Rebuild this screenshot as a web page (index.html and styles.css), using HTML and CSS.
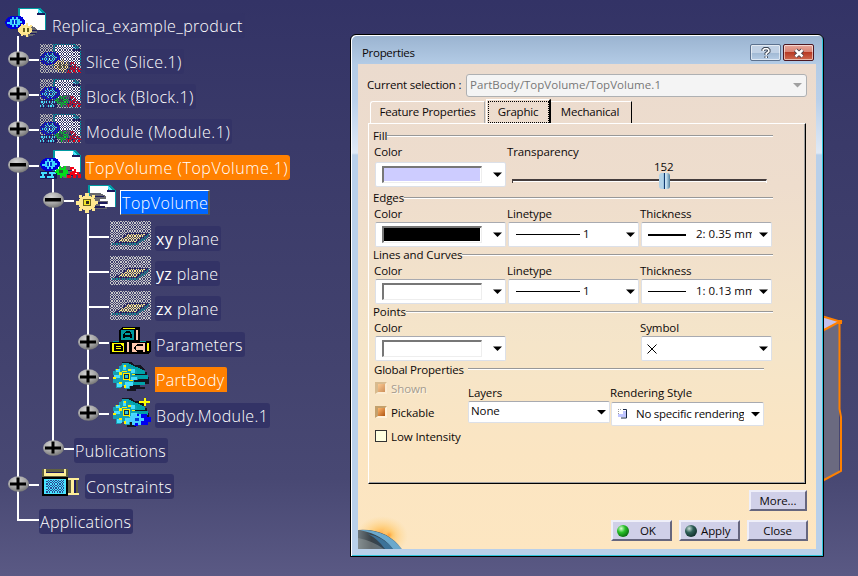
FILE: index.html
```html
<!DOCTYPE html>
<html lang="en">
<head>
<meta charset="utf-8">
<title>Properties</title>
<link rel="stylesheet" href="styles.css">
</head>
<body>
<svg class="defs" width="0" height="0" aria-hidden="true">
  <defs>
    <mask id="dither" maskUnits="userSpaceOnUse" x="0" y="0" width="41" height="29"><g transform="scale(1.28125 1.31818)" fill="none" stroke="#fff" stroke-dasharray="1 1" shape-rendering="crispEdges"><path d="M0 .5H32M0 2.500H32M0 4.500H32M0 6.500H32M0 8.500H32M0 10.500H32M0 12.500H32M0 14.500H32M0 16.500H32M0 18.500H32M0 20.500H32"/><path d="M1 1.500H32M1 3.500H32M1 5.500H32M1 7.500H32M1 9.500H32M1 11.500H32M1 13.500H32M1 15.500H32M1 17.500H32M1 19.500H32M1 21.500H32"/></g></mask>
    <radialGradient id="ball" cx=".4" cy=".3" r=".75"><stop offset="0" stop-color="#d4d4d4"/><stop offset=".6" stop-color="#a2a2a2"/><stop offset="1" stop-color="#707070"/></radialGradient>
    <symbol id="plus" viewBox="0 0 21 16"><ellipse cx="10.5" cy="8" rx="10.5" ry="7.8" fill="url(#ball)"/><path d="M2 6.500h16v3h-16zM8.500 1.500h3v12h-3z" fill="#000"/></symbol>
    <symbol id="minus" viewBox="0 0 21 16"><ellipse cx="10.5" cy="8" rx="10.5" ry="7.800" fill="url(#ball)"/><path d="M2 6h16v3.500h-16z" fill="#000"/></symbol>
    <symbol id="page" viewBox="0 0 41 29"><path d="M13 0h22l6 6v16H13z" fill="#009aa2"/><path d="M14.500 1h18v4h7v16.500h-25z" fill="#fff"/><path d="M33 1l6 5h-3l-3-2z" fill="#4fe6ff"/><path d="M32 5h8v1.500h-8z" fill="#1c1a5c"/></symbol>
    <symbol id="bluegear" viewBox="0 0 20 14"><ellipse cx="11.500" cy="7" rx="8.500" ry="6.500" fill="#0000e0"/><ellipse cx="9" cy="7.500" rx="9" ry="6.500" fill="#0000d8"/><path d="M5 4h2V2h2v2h2V2h2v2h2v2h2v2h-2v2h-2v2h-2v-2H9v2H7v-2H5V9H2V7h3z" fill="#3fd4ff"/><path d="M7 5h5v4H7z" fill="#003ad8"/><path d="M9 5h1v4H9z" fill="#9ff"/></symbol>
    <symbol id="goldgear" viewBox="0 0 20 14"><ellipse cx="11.500" cy="8" rx="8.500" ry="5.500" fill="#68686e"/><path d="M14 7h6v1h-6zM13 10h6v1h-6z" fill="#1c1a5c"/><ellipse cx="8" cy="7" rx="7.500" ry="5" fill="#ffe58c"/><path d="M4 1h2v2H4zM9 0h2v3H9zM13 2h2v2h-2zM4 11h2v2H4zM9 11h2v3H9z" fill="#ffe58c"/><path d="M6 5h6v4H6z" fill="#68621c"/><path d="M8 4h1.500v6H8z" fill="#fff3a0"/></symbol>
    <symbol id="greengear" viewBox="0 0 20 14"><ellipse cx="11.500" cy="7" rx="8.500" ry="6" fill="#68686e"/><path d="M11 5h8v1h-8zM12 9h8v1.500h-8z" fill="#1c1a5c"/><path d="M1 4h3V1h2v2h3V1h2v4h2v4h-2v3H9v-1H7v2H5v-3H2V8H0V6h1z" fill="#00e01c"/><path d="M4 5h4v3H4z" fill="#2a5a3a"/></symbol>
    <symbol id="redparts" viewBox="0 0 14 11"><path d="M3 0h4v2h2v3h3v2h2v4h-3V8H9v3H6V8H4v3H0V8h3V5h2V3H3z" fill="#f00014"/><path d="M5 2h2v2H5zM8 6h2v1H8z" fill="#fff"/></symbol>
    <symbol id="product" viewBox="0 0 41 29"><use href="#page" width="41" height="29"/><use href="#bluegear" y="7" width="20" height="14"/><use href="#goldgear" x="12" y="15" width="20" height="14"/></symbol>
    <symbol id="slice" viewBox="0 0 41 29"><use href="#page" width="41" height="29"/><use href="#bluegear" y="7" width="20" height="14"/><use href="#goldgear" x="13" y="15" width="20" height="14"/><use href="#redparts" x="27" y="18" width="14" height="11"/></symbol>
    <symbol id="assembly" viewBox="0 0 41 29"><use href="#page" width="41" height="29"/><path d="M0 21h17v8H0z" fill="#17175a"/><path d="M1 22h6v2H1zM9 22h7v2H9zM0 26h5v2H0zM7 26h7v2H7zM2 23h2v4H2zM11 23h2v4h-2z" fill="#45dfff"/><use href="#bluegear" y="7" width="20" height="14"/><use href="#greengear" x="15" y="15" width="20" height="14"/><use href="#redparts" x="27" y="17" width="14" height="11"/></symbol>
    <symbol id="plane" viewBox="0 0 41 29"><path d="M0 0h41v29H0z" fill="#c8c8c8"/><path d="M4 22L18 12h22L26 22z" fill="#1c1a5c"/><path d="M7 21L19 13h17L25 21z" fill="#ffe98c"/><path d="M2 22h24L39 13v3L27 24H2z" fill="#148a96"/></symbol>
    <symbol id="body" viewBox="0 0 41 29"><path d="M12 0h9l3 3h7l4 5h-7v2h9v4l2 2v6h-9v3h5v2h-9v2h-9z" fill="#15151f"/><path d="M9 4l9-3 17 8v3H22zM19 13h19v4H19zM18 20h17v3H18z" fill="#00a3aa"/><path d="M5 7h4V4h3V1h6v4h5v3h4v3h-3v3h4v4h-4v5h-4v4h-5v-3h-4v2H6v-5H3v-4h2v-4H3v-4h2z" fill="#15a0b4"/><path d="M6 7h4v3H6zM13 3h3v5h-3zM21 7h4v4h-4zM4 13h6v3H4zM21 15h6v3h-6zM7 21h5v4H7zM15 20h4v6h-4zM19 20h4v4h-4z" fill="#48dfff"/><path d="M6 7h2v1H6zM9 10h3v3H9zM14 3h2v2h-2zM18 7h3v2h-3zM3 15h3v2H3zM9 20h3v2H9zM19 18h4v1h-4zM14 23h2v3h-2zM22 12h3v1h-3zM12 9h5v1h-5z" fill="#fff200"/><path d="M13 11h7v7h-7z" fill="#fff200"/><path d="M14 12h5v5h-5z" fill="#132e48"/><path d="M15 13h3v3h-3z" fill="#28c8d8"/></symbol>
  </defs>
</svg>

<svg class="lines" width="130" height="540" aria-hidden="true"><path d="M18 36V520H39M53 178V449M88 214V413"/></svg>
<main class="tree">
  <div class="row root"><svg class="icon"><use href="#product"/></svg><span class="label">Replica_example_product</span></div>
  <div class="row l1"><svg class="node"><use href="#plus"/></svg><i class="link"></i><svg class="icon"><g mask="url(#dither)"><path d="M0 0h41v29H0z" fill="#b4b4b4"/><use href="#slice" width="41" height="29"/></g></svg><span class="label">Slice (Slice.1)</span></div>
  <div class="row l1"><svg class="node"><use href="#plus"/></svg><i class="link"></i><svg class="icon"><g mask="url(#dither)"><path d="M0 0h41v29H0z" fill="#b4b4b4"/><use href="#assembly" width="41" height="29"/></g></svg><span class="label">Block (Block.1)</span></div>
  <div class="row l1"><svg class="node"><use href="#plus"/></svg><i class="link"></i><svg class="icon"><g mask="url(#dither)"><path d="M0 0h41v29H0z" fill="#b4b4b4"/><use href="#assembly" width="41" height="29"/></g></svg><span class="label top">Module (Module.1)</span></div>
  <div class="row l1"><svg class="node"><use href="#minus"/></svg><i class="link"></i><svg class="icon"><use href="#assembly"/></svg><span class="label hot top">TopVolume (TopVolume.1)</span></div>
  <div class="row l2"><svg class="node"><use href="#minus"/></svg><i class="link"></i><svg class="icon"><use href="#page"/><path d="M14 8h11l6 3v3h-6v2h8v3h-8v3h7v2H20z" fill="#68686e"/><path d="M17 11h12v1H17zM20 17h12v2H20zM20 21h10v2H20z" fill="#1c1a5c"/><ellipse cx="12" cy="18" rx="9" ry="7.500" fill="#ffe88f"/><path d="M10 8h4v3h-4zM4 10h3v3H4zM17 10h3v3h-3zM1 16h3v4H1zM20 16h3v3h-3zM4 23h3v3H4zM17 23h3v3h-3zM10 25h4v3h-4z" fill="#ffe88f"/><path d="M8 14h8v7H8z" fill="#6a6420"/><path d="M9 15h6v5H9z" fill="#f2e628"/><path d="M11 16h3v3h-3z" fill="#302c20"/></svg><span class="label picked">TopVolume</span></div>
  <div class="row l3"><i class="link long"></i><svg class="icon"><g mask="url(#dither)"><use href="#plane" width="41" height="29"/></g></svg><span class="label"><b>xy</b> plane</span></div>
  <div class="row l3"><i class="link long"></i><svg class="icon"><g mask="url(#dither)"><use href="#plane" width="41" height="29"/></g></svg><span class="label"><b>yz</b> plane</span></div>
  <div class="row l3"><i class="link long"></i><svg class="icon"><g mask="url(#dither)"><use href="#plane" width="41" height="29"/></g></svg><span class="label"><b>zx</b> plane</span></div>
  <div class="row l3"><svg class="node"><use href="#plus"/></svg><i class="link"></i><svg class="icon"><path d="M12 0h18v14h11v11l-3 2H0V15h9V3z" fill="#000"/><path d="M13 1h12v1H13z" fill="#ff0"/><path d="M11 3h13v10H11z" fill="#009a9f"/><path d="M26 3h2v10h-2z" fill="#ffcaae"/><path d="M2 16h12v9H2z" fill="#ff0"/><path d="M17 15h2v10h-2z" fill="#ffcaae"/><path d="M22 16h13v9H22z" fill="#ffcaae"/><path d="M37 16h2v8h-2z" fill="#ff0"/><path d="M3 14h6v1H3zM30 14h6v1h-6z" fill="#009a9f"/><path d="M14 11V7l2-2h4l1 2v4M14 9h7M5 18h6l1 1v4H5zM5 20.500h6M33 18h-6l-2 2v2l2 2h6" fill="none" stroke="#000" stroke-width="1.300"/></svg><span class="label">Parameters</span></div>
  <div class="row l3"><svg class="node"><use href="#plus"/></svg><i class="link"></i><svg class="icon"><use href="#body"/></svg><span class="label hot square">PartBody</span></div>
  <div class="row l3"><svg class="node"><use href="#plus"/></svg><i class="link"></i><svg class="icon"><use href="#body"/><path d="M29 3h11v2H29zM34 0h2v8h-2z" fill="#ff0"/><path d="M27 16h10v3h4v5h-3v3h-6l-8 1z" fill="#0000f0"/><path d="M20 18h3v-2h3v2h3v-2h2v4h3v3h-3v4h-3v-2h-3v2h-3v-3h-3v-3h1z" fill="#48cfff"/><path d="M25 20h4v3h-4z" fill="#003ad8"/></svg><span class="label">Body.Module.1</span></div>
  <div class="row l2"><svg class="node"><use href="#plus"/></svg><i class="link"></i><span class="label bare">Publications</span></div>
  <div class="row l1"><svg class="node"><use href="#plus"/></svg><i class="link"></i><svg class="icon"><path d="M2 0h26v8H2zM28 9h10v17H28z" fill="#68682f" opacity=".75"/><path d="M4 0h2v7H4zM24 0h2v7h-2zM6 4h18v3H6zM28 9h11v2H28zM28 24h11v2H28zM31 11h3v13h-3z" fill="#ffee98"/><path d="M6 3h18v1H6zM34 11h2v13h-2z" fill="#1c1a5c"/><path d="M2 8h26v19H2z" fill="#000"/><path d="M4 10h22v15H4z" fill="#49e2ff"/><g mask="url(#dither)"><path d="M6 11h18v13H6z" fill="#2c4890"/></g></svg><span class="label">Constraints</span></div>
  <div class="row l1"><span class="label bare apps">Applications</span></div>
</main>

<svg class="solid" width="24" height="172" aria-hidden="true"><path d="M0 4l19 4v150l-19 9z" fill="#6b6a80"/><path d="M4 2l16 5-16 8z" fill="#c3c0ec"/><path d="M3 1.500L20 6.500 3 15.500M19.500 6v88l1.500 8v54L3 165.500" fill="none" stroke="#ff8000" stroke-width="2"/><path d="M18 5h4v4h-4z" fill="#ff8000"/></svg>

<section class="dialog">
  <header class="titlebar"><span class="title">Properties</span>
    <button class="cap help"><svg width="12" height="12"><path d="M3.200 4V2.800L4.500 1.700h3L8.800 3v1.500L6.200 6.600v1.300M6.200 9.200v1.800" fill="none" stroke="#3b4453" stroke-width="3.400"/><path d="M3.200 4V2.800L4.500 1.700h3L8.800 3v1.500L6.200 6.600v1.300M6.200 9.200v1.800" fill="none" stroke="#fff" stroke-width="1.600"/></svg></button>
    <button class="cap close"><svg width="12" height="12"><path d="M2.500 3l7 6.500M9.500 3l-7 6.500" stroke="#47414a" stroke-width="4.400"/><path d="M2.500 3l7 6.500M9.500 3l-7 6.500" stroke="#fff" stroke-width="2.400"/></svg></button>
  </header>
  <div class="client">
    <div class="selection"><span class="sel-label">Current selection :</span><div class="field"><span>PartBody/TopVolume/TopVolume.1</span><i class="arrow"></i></div></div>
    <nav class="tabs"><div class="tab first"><span>Feature Properties</span></div><div class="tab active"><span>Graphic</span></div><div class="tab last"><span>Mechanical</span></div></nav>
    <div class="panel">
      <div class="group fill">
        <div class="legend"><span>Fill</span><i></i></div>
        <div class="cols">
          <div class="col"><label>Color</label><div class="combo"><i class="swatch lilac"></i><i class="arrow"></i></div></div>
          <div class="col wide"><label>Transparency</label><div class="slider"><i class="track"></i><i class="thumb"></i><span class="value">152</span></div></div>
        </div>
      </div>
      <div class="group">
        <div class="legend"><span>Edges</span><i></i></div>
        <div class="cols">
          <div class="col"><label>Color</label><div class="combo"><i class="swatch black"></i><i class="arrow"></i></div></div>
          <div class="col"><label>Linetype</label><div class="combo"><i class="stroke"></i><span class="num">1</span><i class="arrow"></i></div></div>
          <div class="col"><label>Thickness</label><div class="combo"><i class="stroke short thick"></i><span class="mm">2: 0.35 mm</span><i class="arrow"></i></div></div>
        </div>
      </div>
      <div class="group">
        <div class="legend"><span>Lines and Curves</span><i></i></div>
        <div class="cols">
          <div class="col"><label>Color</label><div class="combo"><i class="swatch"></i><i class="arrow"></i></div></div>
          <div class="col"><label>Linetype</label><div class="combo"><i class="stroke"></i><span class="num">1</span><i class="arrow"></i></div></div>
          <div class="col"><label>Thickness</label><div class="combo"><i class="stroke short"></i><span class="mm">1: 0.13 mm</span><i class="arrow"></i></div></div>
        </div>
      </div>
      <div class="group">
        <div class="legend"><span>Points</span><i></i></div>
        <div class="cols">
          <div class="col"><label>Color</label><div class="combo"><i class="swatch"></i><i class="arrow"></i></div></div>
          <div class="col"></div>
          <div class="col"><label>Symbol</label><div class="combo"><svg class="cross" width="10" height="10"><path d="M.5.5l9 9M9.500.5l-9 9" stroke="#000"/></svg><i class="arrow"></i></div></div>
        </div>
      </div>
      <div class="group global">
        <div class="legend"><span>Global Properties</span><i></i></div>
        <div class="gcols">
          <div class="checks">
            <div class="check off"><i class="box lit"></i><span>Shown</span></div>
            <div class="check"><i class="box lit"></i><span>Pickable</span></div>
            <div class="check"><i class="box"></i><span>Low Intensity</span></div>
          </div>
          <div class="layers"><label>Layers</label><div class="combo"><span>None</span><i class="arrow"></i></div></div>
          <div class="style"><label>Rendering Style</label><div class="combo"><svg width="10" height="10"><path d="M0 5h5V2h3v6H0z" fill="#bfc5ff"/><path d="M0 .5h4M.5 2v3" stroke="#999" stroke-dasharray="1 1"/><path d="M5 .5h3.500v8.500H3" fill="none" stroke="#182848"/></svg><span class="nsr">No specific rendering</span><i class="arrow"></i></div></div>
        </div>
      </div>
    </div>
    <footer class="buttons">
      <div class="brow more"><button class="btn"><span>More...</span></button></div>
      <div class="brow"><button class="btn led-btn"><i class="led green"></i><span>OK</span></button><button class="btn led-btn"><i class="led dark"></i><span>Apply</span></button><button class="btn"><span>Close</span></button></div>
    </footer>
    <svg class="planet" width="56" height="40" aria-hidden="true"><defs><radialGradient id="glow"><stop offset="0" stop-color="#ff9c38"/><stop offset=".4" stop-color="#ffc565" stop-opacity=".8"/><stop offset="1" stop-color="#ffd890" stop-opacity="0"/></radialGradient><linearGradient id="globe" x1="0" y1="0" x2="1" y2="0"><stop offset="0" stop-color="#6d777c"/><stop offset=".3" stop-color="#3a4248"/><stop offset=".6" stop-color="#2f4659"/><stop offset="1" stop-color="#7ba5c0"/></linearGradient></defs><ellipse cx="24" cy="27" rx="26" ry="20" fill="url(#glow)"/><ellipse cx="31" cy="26" rx="8" ry="8" fill="url(#glow)"/><path d="M0 21Q28 19 44 40H0z" fill="url(#globe)"/><path d="M2 21Q29 20 43 40H35Q25 26 2 21z" fill="#6ba9cd"/><path d="M10 25Q26 28 35 40H27Q20 30 10 25z" fill="#3c7299"/><path d="M0 29Q15 32 26 40H0z" fill="#a7aeb0" opacity=".4"/></svg>
  </div>
</section>
</body>
</html>
```

FILE: styles.css
```css
* { box-sizing: border-box; }
body {
  margin: 0; width: 858px; height: 576px; overflow: hidden; position: relative;
  background: linear-gradient(#333366 0, #3a3a69 25%, #42426e 60%, #484873 83%, #5a5984 100%);
  font: 11.5px/16px "Open Sans", "Noto Sans", sans-serif; letter-spacing: -.1px; color: #0c0808;
}
i { display: block; font-style: normal; }
button { font: inherit; letter-spacing: inherit; color: inherit; padding: 0; border: 0; }
.defs { position: absolute; }

.lines { position: absolute; left: 0; top: 0; fill: none; stroke: #fff; stroke-width: 2; }
.tree { position: relative; padding-top: 13px; width: 340px; color: #fff; font-size: 16px; font-weight: 300; letter-spacing: .35px; }
.row { display: flex; align-items: flex-start; height: 35px; }
.row:nth-child(1), .row:nth-child(4), .row:nth-child(6), .row:nth-child(9), .row:nth-child(11), .row:nth-child(13) { height: 36px; }
.root { padding-left: 5px; }
.l1 { padding-left: 8px; }
.l2 { padding-left: 43px; }
.l3 { padding-left: 78px; }
.node { width: 21px; height: 16px; margin-top: 2px; flex: none; }
.link { width: 11px; height: 2px; margin-top: 10px; background: #fff; flex: none; border-right: 1px solid transparent; background-clip: padding-box; }
.link.long { width: 22px; margin-left: 10px; }
.icon { width: 41px; height: 29px; margin: -5px 4px 0 0; flex: none; shape-rendering: crispEdges; }
.label { height: 25px; line-height: 27px; padding: 0 2px 0 1px; border-radius: 3px; background: #333366; white-space: nowrap; }
.root .label { padding-left: 2px; }
.label b { font-weight: 500; }
.label.bare { margin-left: -1px; }
.label.apps { margin-left: 31px; }
.label.hot { background: #ff8000; }
.label.top { letter-spacing: .55px; }
.label.square { border-radius: 0 2px 0 0; }
.label.picked { background: #0066ff; border-radius: 0; border: 1px solid #fff; border-right: 2px solid #555; border-bottom-color: #555; line-height: 24px; padding: 0 0 0 1px; letter-spacing: .5px; }

.solid { position: absolute; left: 820px; top: 315px; }

.dialog {
  position: absolute; left: 350px; top: 34px; width: 474px; height: 523px;
  border: 1px solid #000; border-radius: 6px 6px 0 0; padding: 0 6px 6px;
  background: linear-gradient(#9ab3d0 0, #b4cce6 30px, #bad0ea 65px, #e0eaf6 118px, #b9d0ea 120px, #b9d0ea 100%);
  box-shadow: inset 1px 1px #fff, inset -1px -1px #30c4dc;
}
.titlebar { display: flex; align-items: center; height: 29px; padding: 6px 3px 0 5px; }
.title { margin-right: auto; letter-spacing: -.3px; }
.cap { display: grid; place-items: center; width: 31px; height: 17px; border: 1px solid #5c718e; border-radius: 2px; box-shadow: inset 0 0 0 1px #ffffff90; background: linear-gradient(#c1d1e5 50%, #9fb7d2 50%, #b7cde6); }
.close { margin-left: 2px; border-color: #4d1721; background: linear-gradient(#e8a69b, #d88373 48%, #b83a24 50%, #ce6a50); }
.client { position: relative; width: 458px; height: 485px; margin-left: 1px; padding: 9px 10px 0; background: linear-gradient(#ebdbce 0, #eeddcd 25%, #f5e5c9 58%, #fbe5c2 80%, #fde6c1 100%); }
.selection { display: flex; align-items: center; height: 24px; margin-right: -1px; }
.sel-label { width: 98px; margin-left: -1px; white-space: nowrap; letter-spacing: -.2px; }
.field { display: flex; flex: 1; align-items: center; justify-content: space-between; height: 23px; padding: 0 4px 0 3px; margin-left: 1px; border: 1px solid #aeb0b2; border-radius: 3px; background: #f4f4f4; color: #777; letter-spacing: .05px; }
.arrow { width: 9px; height: 5px; background: #000; clip-path: polygon(0 10%, 100% 10%, 50% 100%); flex: none; }
.field .arrow { background: #a0a0a0; }
.tabs { display: flex; align-items: flex-end; height: 26px; padding-left: 2px; }
.tab { height: 22px; line-height: 20px; text-align: center; white-space: nowrap; border-top: 1px solid #fff; letter-spacing: -.2px; }
.tab.first { width: 115px; border-left: 1px solid #fff; border-right: 1px solid #aaa; border-radius: 3px 0 0 0; }
.tab.active { width: 65px; height: 24px; margin-left: 1px; border-left: 1px solid #fff; border-right: 2px solid #000; padding: 1px; }
.tab.active span { display: block; width: 61px; height: 22px; border: 1px dotted #000; line-height: 20px; padding-right: 1px; }
.tab.last { width: 81px; border-right: 1px solid #000; padding-right: 2px; }
.panel { width: 438px; height: 361px; padding: 4px 0 0 4px; border: 1px solid #fff; border-right: 1px solid #000; border-bottom: 1px solid #000; box-shadow: inset -1px -1px #a0a0a0; }
.group { height: 57px; }
.group.fill { height: 62px; }
.legend { display: flex; align-items: center; height: 16px; width: 400px; white-space: nowrap; }
.legend i { flex: 1; height: 2px; border-top: 1px solid #989898; background: #fff; }
.cols { display: grid; grid-template-columns: 131px 131px 131px; column-gap: 2px; padding-left: 2px; }
.col.wide { grid-column: span 2; }
label { display: block; height: 16px; margin-left: -1px; white-space: nowrap; }
.combo { display: flex; align-items: center; height: 25px; border: 1px solid #dce0e8; border-top-color: #a8aab0; border-radius: 2px; background: #fff; padding: 0 3px 0 6px; overflow: hidden; white-space: nowrap; }
.combo .arrow { margin-left: auto; }
.fill .combo { margin-top: 2px; border-top-color: #dce0e8; }
.swatch { width: 100px; height: 17px; border: 2px solid #777; border-right: 1px solid #eee; border-bottom: 1px solid #eee; background: #fff; box-shadow: inset -1px -1px #fff; }
.swatch.lilac { background: #cdccff; }
.swatch.black { background: #000; }
.slider { position: relative; height: 29px; }
.track { position: absolute; left: 4px; top: 19px; width: 255px; height: 4px; border: solid #443c3c; border-width: 2px 0 0 1px; box-shadow: inset 0 1px #fff; border-right: 1px solid #fff; }
.thumb { position: absolute; left: 151px; top: 13px; width: 11px; height: 16px; border-radius: 3px; background: linear-gradient(90deg, #b3d3e8 0 35%, #8fb8d4 45%, #123b70 45% 55%, #c9e4f4 55% 65%, #4f7e9c); }
.value { position: absolute; left: 146px; top: -1px; }
.stroke { width: 64px; height: 1px; margin-left: 1px; background: #000; }
.stroke.short { width: 38px; margin-left: 0; }
.stroke.thick { height: 2px; }
.num { margin-left: 3px; }
.mm { margin-left: 10px; width: 56px; overflow: hidden; letter-spacing: 0; }
.num, .mm { position: relative; top: -1px; }
.cross { margin-left: -1px; }

.global .legend { height: 17px; padding-left: 1px; width: 391px; letter-spacing: -.2px; }
.global .legend i { margin-left: 4px; margin-top: -2px; }
.gcols { display: flex; align-items: flex-start; height: 80px; }
.checks { width: 95px; padding: 0 0 0 2px; margin-top: -2px; }
.check { display: flex; align-items: center; height: 24px; white-space: nowrap; }
.check span { margin: 1px 0 0 4px; }
.box { width: 12px; height: 12px; margin-top: -1px; border: 1px solid #333; background: #ffffe0; flex: none; }
.box.lit { border: 3px solid #c4a06b; border-right-color: #fff2dc; border-bottom-color: #fff2dc; border-width: 2px 2px 2px 3px; background: linear-gradient(135deg, #ffb870, #b05512); }
.check.off { color: #a59c90; text-shadow: 1px 1px #fff6e4; }
.off .box { opacity: .6; }
.layers { width: 142px; padding-top: 7px; }
.layers label { margin: 0; }
.layers .combo { height: 22px; padding-left: 2px; }
.style { width: 153px; margin-left: 1px; padding-top: 7px; }
.style .combo { margin-top: 1px; height: 24px; }
.nsr { margin-left: 8px; width: 108px; overflow: hidden; letter-spacing: -.25px; }
.layers .combo span { position: relative; top: -1px; }

.buttons { padding-top: 6px; }
.brow { display: flex; justify-content: flex-end; gap: 7px; margin-right: -2px; }
.brow.more { margin-right: -1px; margin-bottom: 9px; }
.more .btn { width: 58px; }
.btn { display: flex; align-items: center; justify-content: center; width: 61px; height: 21px; border: 2px solid #efeff9; border-right: 2px solid #66667e; border-bottom: 2px solid #66667e; background: #d0d0e8; white-space: nowrap; }
.led-btn { justify-content: flex-start; padding-left: 4px; }
.led { width: 12px; height: 12px; border-radius: 50%; margin-right: 4px; flex: none; }
.led.green { margin-right: 11px; background: radial-gradient(circle at 35% 30%, #d8ffd0, #28c028 35%, #045a08 85%); }
.led.dark { background: radial-gradient(circle at 35% 30%, #c8e0d8, #306058 35%, #0a2422 85%); }
.planet { position: absolute; left: 0; bottom: 0; }
```
